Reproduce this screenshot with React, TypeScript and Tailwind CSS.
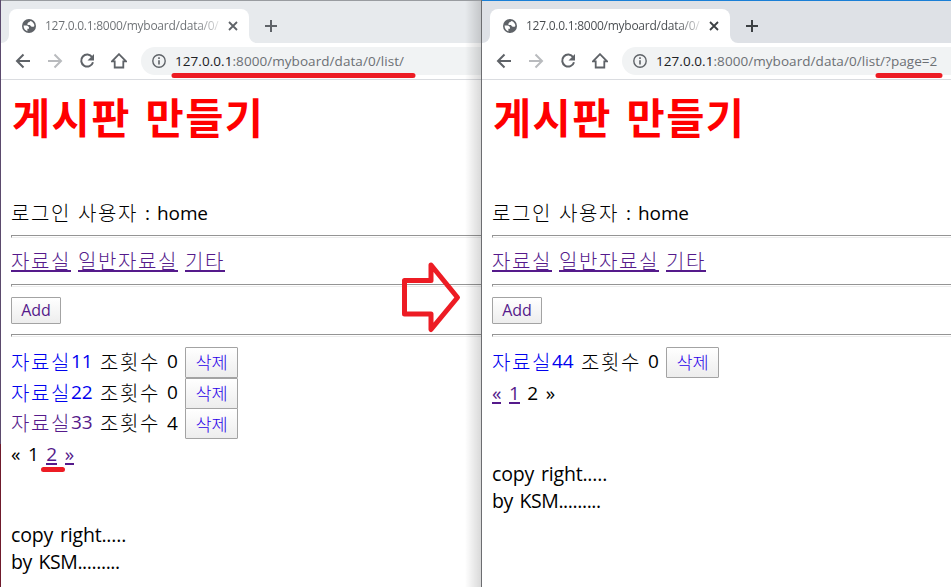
import type { ReactNode } from "react";
import clsx from "clsx";

const latin = "font-['Open_Sans','Noto_Sans_CJK_KR',sans-serif]";
const korean = "font-['Noto_Sans_CJK_KR',sans-serif]";

function Ko({ children, className }: { children: ReactNode; className?: string }) {
  return (
    <span className={clsx(korean, "inline-block text-[20px] tracking-[1.6px] whitespace-nowrap font-light", className)}>
      {children}
    </span>
  );
}

function Globe() {
  return (
    <svg viewBox="0 0 14 14" className="h-[14px] w-[14px] shrink-0">
      <circle cx="7" cy="7" r="7" fill="#5f6368" />
      <path d="M1.600 6.600H4.500C6.200 6.700 7.300 7.800 7 9.700H5.400V12.200C3 11.600 1.500 9.400 1.600 6.600Z" fill="#fff" />
      <path d="M8.700 1.900C10.900 2.600 12.300 4.500 12.400 7C11.700 8.200 9.100 8.200 8.300 6.600L8 6H5.500C5.200 4.300 6 3.300 7.500 3.100C7.500 2.500 8 2 8.700 1.900Z" fill="#fff" />
    </svg>
  );
}

function Stroke({ d, className, w = 2 }: { d: string; className?: string; w?: number }) {
  return (
    <svg viewBox="0 0 16 16" className={clsx("h-4 w-4 shrink-0", className)} fill="none" stroke="currentColor" strokeWidth={w}>
      <path d={d} />
    </svg>
  );
}

function Chrome({ active, path }: { active: boolean; path: string }) {
  return (
    <>
      <div className={clsx("flex h-[43px] border-t pl-2", active ? "border-[#1a7fd6] bg-[#dee1e6]" : "border-[#999ca0] bg-[#e7eaed]")}>
        <div className="relative mt-2 flex h-[34px] w-[240px] items-center rounded-t-lg bg-white pl-[13px]">
          <svg className="absolute bottom-0 -left-2 h-2 w-2" viewBox="0 0 8 8" fill="#fff"><path d="M8 0v8H0a8 8 0 0 0 8-8z" /></svg>
          <svg className="absolute -right-2 bottom-0 h-2 w-2" viewBox="0 0 8 8" fill="#fff"><path d="M0 0v8h8a8 8 0 0 1-8-8z" /></svg>
          <Globe />
          <span
            className={clsx(
              latin,
              "ml-[9px] w-[176px] bg-clip-text text-[12px] leading-5 tracking-[-0.260px] whitespace-nowrap text-transparent",
              active ? "bg-linear-to-r from-[#45494d] from-85% to-[#eeeeee]" : "bg-linear-to-r from-[#6b6f73] from-85% to-[#eeeeee]",
            )}
          >
            127.0.0.1:8000/myboard/data/0/
          </span>
          <Stroke d="M4 4l8 8M12 4l-8 8" w={1.8} className={clsx("ml-[4px]", active ? "text-[#3c4043]" : "text-[#5f6368]")} />
        </div>
        <Stroke d="M8 2v12M2 8h12" className={clsx("mt-[17px] ml-[14px]", active ? "text-[#3c4043]" : "text-[#5f6368]")} />
      </div>
      <div className="flex h-[37px] items-center border-b border-[#dadce0] bg-white pl-[14px] text-[#5f6368]">
        <Stroke d="M15 8H2.5M8.5 1.5L2 8l6.500 6.500" />
        <Stroke d="M1 8h12.500M7.500 1.500L14 8l-6.500 6.500" className="ml-4 text-[#b9bbbe]" />
        <svg viewBox="0 0 16 16" className="ml-4 h-4 w-4" fill="none" stroke="currentColor" strokeWidth="2">
          <path d="M13.200 4.200A6 6 0 1 0 14 9.200" />
          <path d="M15 1v6.500H8.500z" fill="currentColor" stroke="none" />
        </svg>
        <Stroke d="M8 1.200L1 8.300h2.700v6.200h8.600V8.300h2.700z" w={1.800} className="ml-4" />
        <div className="ml-[14px] flex h-7 flex-1 items-center rounded-l-full bg-[#f1f3f4] pl-[11px]">
          <svg viewBox="0 0 14 14" className="h-[14px] w-[14px]" fill="none" stroke="currentColor" strokeWidth="1.400">
            <circle cx="7" cy="7" r="6.200" />
            <path d="M7 6.200v4.300M7 3.300v1.600" strokeWidth="1.600" />
          </svg>
          <span className={clsx(latin, "ml-[9px] text-[13.500px] leading-5 tracking-[0.060px] whitespace-nowrap text-[#6c7074]")}>
            <span className="text-[#202124]">127.0.0.1</span>
            {path}
          </span>
        </div>
      </div>
    </>
  );
}

function Rule() {
  return <div className="h-[3px] shrink-0 border-t border-b border-l border-t-[#949494] border-b-[#ececec] border-l-[#949494]" />;
}

function Row({ title, views, visited }: { title: string; views: string; visited?: boolean }) {
  return (
    <div className="flex h-[30.700px] items-center">
      <span className={clsx("flex w-[89px] items-center pb-[2px]", visited ? "text-[#551a8b]" : "text-[#0000ee]")}>
        <Ko>자료실</Ko>
        <span>{title}</span>
      </span>
      <Ko className="w-[67px] pb-[2px]">조횟수</Ko>
      <span className="w-[18px] pb-px">{views}</span>
      <button className="flex h-[31px] w-[53px] items-center justify-center rounded-[1px] border border-[#a3a3a3] bg-linear-to-b from-white to-[#ededed] text-[#2a00e8]">
        <span className={clsx(korean, "text-[17.500px] leading-5 font-light")}>삭제</span>
      </button>
    </div>
  );
}

function Board({ children }: { children: ReactNode }) {
  return (
    <div className={clsx(latin, "flex flex-1 flex-col bg-white pl-[10px] text-[19px] leading-[27px] text-black")}>
      <h1 className={clsx(korean, "mt-[6px] h-[60px] pl-px text-[41.500px] leading-[60px] font-bold tracking-[1.400px] whitespace-nowrap text-[#ff0000] [word-spacing:4px]")}>게시판 만들기</h1>
      <div className="mt-[53px] flex h-[28px] items-center">
        <Ko className="w-[67px] pb-px">로그인</Ko>
        <Ko className="w-[67px] pb-px">사용자</Ko>
        <span className="w-[12px]">:</span>
        <span className="tracking-[-0.100px]">home</span>
      </div>
      <div className="mt-[8px]" />
      <Rule />
      <nav className="mt-[9px] flex h-[27px] gap-[7px] text-[#551a8b]">
        <Ko className="h-[25px] border-b-2 border-[#551a8b] leading-[27px]">자료실</Ko>
        <Ko className="h-[25px] border-b-2 border-[#551a8b] leading-[27px]">일반자료실</Ko>
        <Ko className="h-[25px] border-b-2 border-[#551a8b] leading-[27px]">기타</Ko>
      </nav>
      <div className="mt-[10px]" />
      <Rule />
      <button className="mt-[10px] flex h-[27px] w-[50px] shrink-0 items-center justify-center rounded-[1px] border border-[#a3a3a3] bg-linear-to-b from-white to-[#ededed] text-[16px] text-[#551a8b]">
        Add
      </button>
      <div className="mt-[10px]" />
      <Rule />
      <div className="mt-[10px]">{children}</div>
      <footer className="mt-[53px] text-[19.500px] whitespace-nowrap [word-spacing:2px]">
        <p className="tracking-[-0.180px]">copy right.....</p>
        <p className="tracking-[-0.420px]">by KSM.........</p>
      </footer>
    </div>
  );
}

function PageLink({ children }: { children: string }) {
  return <span className="h-[24px] border-b-2 border-[#551a8b] leading-[27px] text-[#551a8b]">{children}</span>;
}

function BrowserWindow({ active, path, children }: { active: boolean; path: string; children: ReactNode }) {
  return (
    <section className={clsx("flex h-full shrink-0 flex-col overflow-hidden border-l", active ? "w-[470px] border-[#6c6d70]" : "w-[481px] border-[#5b4a6d]")}>
      <Chrome active={active} path={path} />
      <Board>{children}</Board>
    </section>
  );
}

export default function App() {
  return (
    <main className="relative flex h-[587px] w-[951px] overflow-hidden bg-white">
      <BrowserWindow active={false} path=":8000/myboard/data/0/list/">
        <Row title="11" views="0" />
        <Row title="22" views="0" />
        <Row title="33" views="4" visited />
        <div className="flex h-[29px] items-start gap-[7.500px] pt-[2px]">
          <span>«</span>
          <span>1</span>
          <PageLink>2</PageLink>
          <PageLink>»</PageLink>
        </div>
      </BrowserWindow>
      <BrowserWindow active path=":8000/myboard/data/0/list/?page=2">
        <Row title="44" views="0" />
        <div className="flex h-[29px] items-start gap-[7.500px] pt-[2px]">
          <PageLink>«</PageLink>
          <PageLink>1</PageLink>
          <span>2</span>
          <span>»</span>
        </div>
      </BrowserWindow>
      <div className="absolute top-px left-[465px] h-full w-[16px] bg-linear-to-r from-transparent to-black/15" />
      <div className="absolute top-[444px] left-0 h-[143px] w-px bg-[#6f1a2c]" />
      <svg className="pointer-events-none absolute inset-0 h-full w-full" viewBox="0 0 951 587" fill="none" stroke="#ed1c24" strokeWidth="5" strokeLinecap="round" strokeLinejoin="round">
        <path d="M174 75.500H413M878 75.500H940M43.500 469.500H62.500" />
        <path d="M404.500 280.500H431V265L457.500 297.500L431 329.500V314H404.500Z" />
      </svg>
    </main>
  );
}
